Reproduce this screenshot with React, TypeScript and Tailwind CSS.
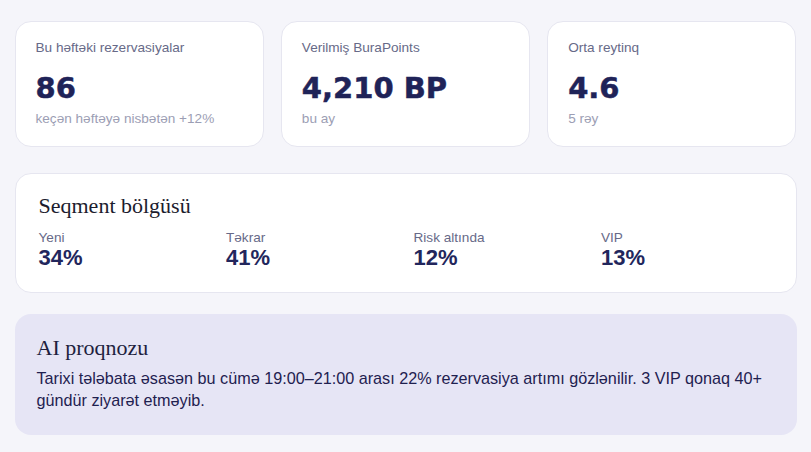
import React from "react";

const sans = { fontFamily: '"Liberation Sans", Arial, sans-serif' };

function StatCard({ label, value, sub }: { label: string; value: string; sub: string }) {
  return (
    <div className="rounded-2xl border border-[#e6e6f0] bg-white px-5 pt-4 pb-[17px]">
      <div className="text-[13.6px] leading-5 text-[#676a88]">{label}</div>
      <div
        className="mt-3 text-[29px] font-bold leading-9 text-[#1f2358]"
        style={{ fontFamily: '"DejaVu Sans", sans-serif', WebkitTextStroke: "0.5px #1f2358" }}
      >
        {value}
      </div>
      <div className="mt-[3px] text-[13.6px] leading-5 text-[#9c9eb4]">{sub}</div>
    </div>
  );
}

function Segment({ label, value }: { label: string; value: string }) {
  return (
    <div>
      <div className="text-[13.6px] leading-4 text-[#676a88]">{label}</div>
      <div className="text-[22px] font-bold leading-6 text-[#22265c]">{value}</div>
    </div>
  );
}

export default function App() {
  return (
    <div className="min-h-[452px] bg-[#f5f5fa] px-[14.5px] pt-[20.5px] pb-4" style={sans}>
      <div className="grid grid-cols-3 gap-[17px]">
        <StatCard label="Bu həftəki rezervasiyalar" value="86" sub="keçən həftəyə nisbətən +12%" />
        <StatCard label="Verilmiş BuraPoints" value="4,210 BP" sub="bu ay" />
        <StatCard label="Orta reytinq" value="4.6" sub="5 rəy" />
      </div>

      <div className="mt-[26px] rounded-2xl border border-[#e6e6f0] bg-white px-[23px] pt-[18px] pb-[22px]">
        <h3
          className="text-[22px] leading-7 text-[#1c1c2e]"
          style={{ fontFamily: '"Liberation Serif", "Times New Roman", serif' }}
        >
          Seqment bölgüsü
        </h3>
        <div className="mt-[10px] grid grid-cols-4 gap-4">
          <Segment label="Yeni" value="34%" />
          <Segment label="Təkrar" value="41%" />
          <Segment label="Risk altında" value="12%" />
          <Segment label="VIP" value="13%" />
        </div>
      </div>

      <div className="mt-[21px] rounded-2xl bg-[#e6e5f5] px-[22px] pt-5 pb-6">
        <h3
          className="text-[22px] leading-7 text-[#1e1f3f]"
          style={{ fontFamily: '"Liberation Serif", "Times New Roman", serif' }}
        >
          AI proqnozu
        </h3>
        <p className="mt-[5px] text-[16.2px] leading-[22px] text-[#1f2150]">
          Tarixi tələbata əsasən bu cümə 19:00–21:00 arası 22% rezervasiya artımı gözlənilir. 3 VIP qonaq 40+
          gündür ziyarət etməyib.
        </p>
      </div>
    </div>
  );
}
